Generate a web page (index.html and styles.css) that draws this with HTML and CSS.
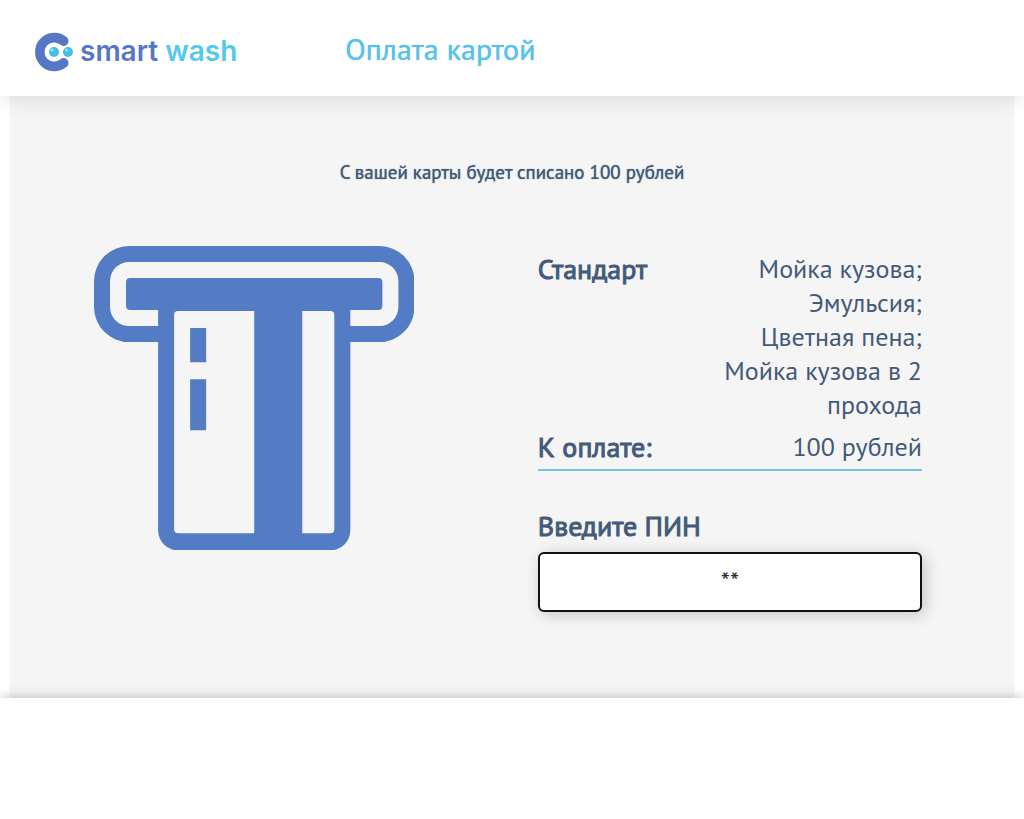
FILE: index.html
```html
<!DOCTYPE html>
<html lang="ru">
<head>
    <meta charset="UTF-8">
    <meta name="viewport" content="width=device-width, initial-scale=1.0">
    <title>Оплата картой</title>
    <link rel="stylesheet" href="styles.css">
</head>
<body>
    <header class="header">
        <a class="logo" href="#">
            <svg class="logo-icon" viewBox="0 0 40 40" aria-hidden="true">
                <path d="M29.5 9A14.3 14.3 0 1 0 29.5 31" fill="none" stroke="#5577c5" stroke-width="10" stroke-linecap="round"/>
                <circle cx="20" cy="20" r="9.5" fill="#fff"/>
                <circle cx="34" cy="20" r="6.5" fill="#fff"/>
                <circle cx="20" cy="20" r="5" fill="#45bfe8"/>
                <circle cx="34" cy="20" r="5" fill="#45bfe8"/>
                <circle cx="18" cy="18" r="1.5" fill="#9be2f7"/>
                <circle cx="32.5" cy="18" r="1.5" fill="#9be2f7"/>
            </svg>
            <span class="logo-text">smart <span class="logo-accent">wash</span></span>
        </a>
        <h1 class="title">Оплата картой</h1>
    </header>

    <main class="main">
        <p class="message">С вашей карты будет списано 100 рублей</p>
        <div class="payment">
            <svg class="card-image" viewBox="0 0 320 304" fill="#537cc5" aria-hidden="true">
                <path fill-rule="evenodd" d="M35 0H285A35 35 0 0 1 320 35V61A35 35 0 0 1 285 96H256V284A20 20 0 0 1 236 304H84A20 20 0 0 1 64 284V96H35A35 35 0 0 1 0 61V35A35 35 0 0 1 35 0ZM35 16A19 19 0 0 0 16 35V61A19 19 0 0 0 35 80H64V64H36A4 4 0 0 1 32 60V36A4 4 0 0 1 36 32H284A4 4 0 0 1 288 36V60A4 4 0 0 1 284 64H256V80H285A19 19 0 0 0 304 61V35A19 19 0 0 0 285 16ZM84 65A4 4 0 0 0 80 69V283A4 4 0 0 0 84 287H160V65ZM208 65V287H236A4 4 0 0 0 240 283V69A4 4 0 0 0 236 65Z"/>
                <path d="M96 82H112V116H96ZM96 133H112V184H96Z"/>
            </svg>
            <form class="details">
                <div class="row">
                    <span class="label">Стандарт</span>
                    <span class="value">Мойка кузова;<br>Эмульсия;<br>Цветная пена;<br>Мойка кузова в 2 прохода</span>
                </div>
                <div class="row total">
                    <span class="label">К оплате:</span>
                    <span class="value">100 рублей</span>
                </div>
                <label class="label" for="pin">Введите ПИН</label>
                <input class="pin" id="pin" type="text" value="**" maxlength="4" autocomplete="off">
            </form>
        </div>
    </main>

    <footer class="footer"></footer>
</body>
</html>
```
FILE: styles.css
```css
* { box-sizing: border-box; }
html, body { height: 100%; margin: 0; padding: 0; }
body { display: flex; flex-direction: column; background-color: #ffffff; color: #435a78; font-family: "PT Sans", "Noto Sans", sans-serif; }
.header { position: relative; z-index: 1; display: flex; align-items: center; gap: 108px; padding: 20px 34px 12px; min-height: 96px; background-color: #ffffff; box-shadow: 0 0 24px rgba(0, 0, 0, 0.14); }
.logo { display: flex; align-items: center; gap: 6px; color: #5577c5; text-decoration: none; }
.logo-icon { width: 40px; height: 40px; }
.logo-text { padding-bottom: 2px; font-family: Inter, sans-serif; font-size: 28px; line-height: 32px; font-weight: 600; }
.logo-accent { color: #55c8ed; }
.title { margin: 0; padding-bottom: 6px; color: #5ac1e8; font-size: 30px; line-height: 40px; font-weight: 500; text-shadow: 0 0 1px currentColor; }
.main { margin: 0 10px; padding: 64px 0 86px; background-color: #f5f5f5; }
.message { margin: 0 0 62px; font-size: 19px; line-height: 24px; font-weight: 500; text-align: center; text-shadow: 0 0 1px currentColor; }
.payment { display: flex; align-items: flex-start; justify-content: space-between; padding: 0 92px 0 84px; }
.card-image { width: 38.7%; height: auto; }
.details { display: flex; flex-direction: column; width: 46.4%; padding-top: 6px; }
.row { display: flex; justify-content: space-between; gap: 20px; }
.label { font-size: 28px; line-height: 34px; font-weight: 500; -webkit-text-stroke: 1px; }
.value { max-width: 200px; font-size: 26px; line-height: 34px; text-align: right; }
.total { margin: 8px 0 38px; padding-bottom: 5px; border-bottom: 2px solid #70c8db; }
.pin { width: 100%; height: 60px; margin-top: 9px; padding: 0 10px 4px; border: 2px solid #111111; border-radius: 6px; background-color: #ffffff; box-shadow: 3px 3px 16px rgba(0, 0, 0, 0.2); color: #222222; font-family: inherit; font-size: 26px; text-align: center; outline: none; }
.footer { position: relative; z-index: 1; flex: 1; background-color: #ffffff; box-shadow: 0 0 12px rgba(0, 0, 0, 0.25); }
```
